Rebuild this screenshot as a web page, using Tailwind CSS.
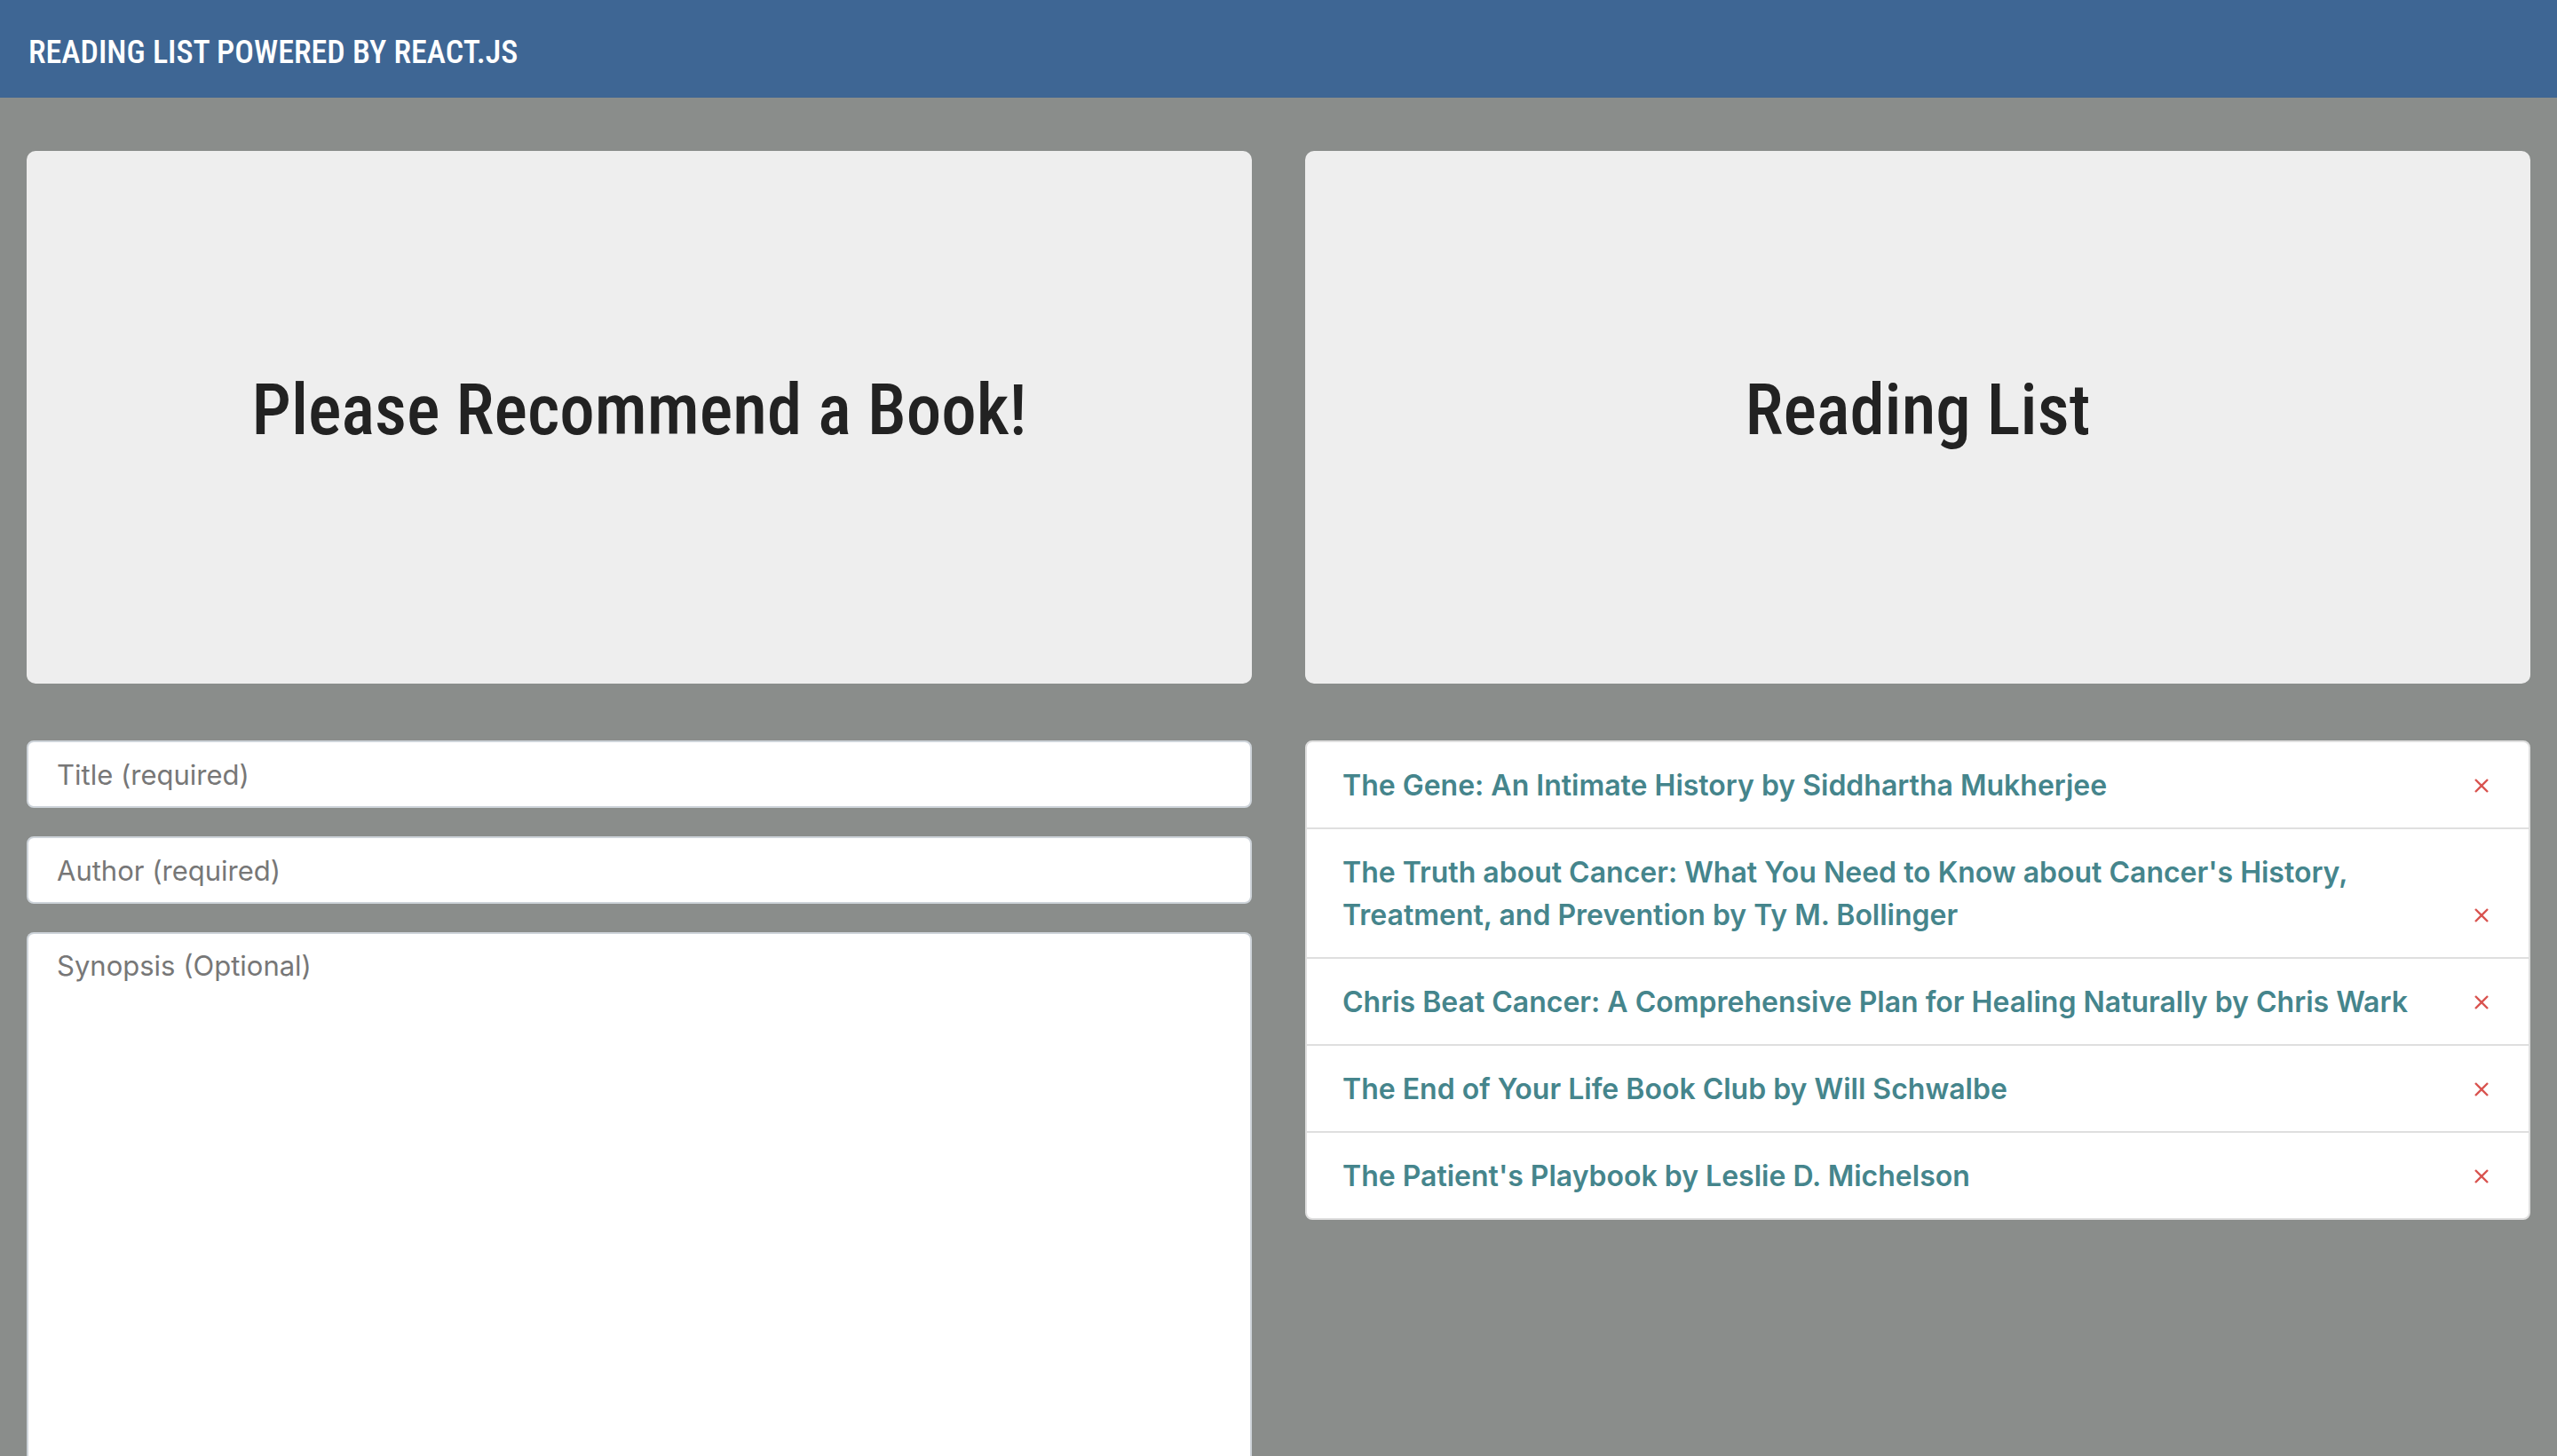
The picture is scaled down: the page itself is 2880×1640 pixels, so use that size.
<!DOCTYPE html>
<html lang="en">
<head>
<meta charset="utf-8">
<title>Reading List</title>
<script src="https://cdn.jsdelivr.net/npm/@tailwindcss/browser@4"></script>
</head>
<body class="min-h-screen bg-[#8a8d8b] font-['Inter',sans-serif] text-[32px] leading-[48px] text-[#222222]">
<nav class="flex h-[110px] items-center bg-[#3e6694] px-8">
  <a href="#" class="font-['Roboto_Condensed',sans-serif] pt-2 text-[36px] leading-[56px] font-medium text-white uppercase">Reading List powered by React.js</a>
</nav>
<main class="grid grid-cols-2 gap-[60px] px-[30px] pt-[60px]">
  <section>
    <header class="flex h-[600px] items-center justify-center rounded-[10px] bg-[#eeeeee]">
      <h1 class="font-['Roboto_Condensed',sans-serif] pb-4 text-[79px] leading-[96px] font-medium">Please Recommend a Book!</h1>
    </header>
    <form class="mt-16 flex flex-col gap-8">
      <input type="text" name="title" aria-label="Title" placeholder="Title (required)" class="h-[76px] w-full rounded-lg border-2 border-[#ced4da] bg-white px-8 text-[31px] placeholder:text-[#777777]">
      <input type="text" name="author" aria-label="Author" placeholder="Author (required)" class="h-[76px] w-full rounded-lg border-2 border-[#ced4da] bg-white px-8 text-[31px] placeholder:text-[#777777]">
      <textarea name="synopsis" rows="20" aria-label="Synopsis" placeholder="Synopsis (Optional)" class="h-[590px] w-full resize-none rounded-t-lg border-2 border-b-0 border-[#ced4da] bg-white px-8 py-3 text-[31px] placeholder:text-[#777777]"></textarea>
    </form>
  </section>
  <section>
    <header class="flex h-[600px] items-center justify-center rounded-[10px] bg-[#eeeeee]">
      <h1 class="font-['Roboto_Condensed',sans-serif] pb-4 text-[79px] leading-[96px] font-medium">Reading List</h1>
    </header>
    <ul class="mt-16 divide-y-2 divide-[#dfdfdf] rounded-lg border-2 border-[#dfdfdf] bg-white font-semibold text-[#45858c]">
      <li class="flex items-end justify-between gap-4 px-10 pt-[25px] pb-[23px]">
        <a href="#">The Gene: An Intimate History by Siddhartha Mukherjee</a>
        <button type="button" aria-label="Delete" class="flex h-12 w-[26px] shrink-0 items-center justify-center text-[#d9534f]"><svg class="size-4" viewBox="0 0 16 16" fill="none" stroke="currentColor" stroke-width="2.4"><path d="M1 1l14 14M15 1L1 15"/></svg></button>
      </li>
      <li class="flex items-end justify-between gap-4 px-10 pt-[25px] pb-[23px]">
        <a href="#">The Truth about Cancer: What You Need to Know about Cancer's History, Treatment, and Prevention by Ty M. Bollinger</a>
        <button type="button" aria-label="Delete" class="flex h-12 w-[26px] shrink-0 items-center justify-center text-[#d9534f]"><svg class="size-4" viewBox="0 0 16 16" fill="none" stroke="currentColor" stroke-width="2.4"><path d="M1 1l14 14M15 1L1 15"/></svg></button>
      </li>
      <li class="flex items-end justify-between gap-4 px-10 pt-[25px] pb-[23px]">
        <a href="#">Chris Beat Cancer: A Comprehensive Plan for Healing Naturally by Chris Wark</a>
        <button type="button" aria-label="Delete" class="flex h-12 w-[26px] shrink-0 items-center justify-center text-[#d9534f]"><svg class="size-4" viewBox="0 0 16 16" fill="none" stroke="currentColor" stroke-width="2.4"><path d="M1 1l14 14M15 1L1 15"/></svg></button>
      </li>
      <li class="flex items-end justify-between gap-4 px-10 pt-[25px] pb-[23px]">
        <a href="#">The End of Your Life Book Club by Will Schwalbe</a>
        <button type="button" aria-label="Delete" class="flex h-12 w-[26px] shrink-0 items-center justify-center text-[#d9534f]"><svg class="size-4" viewBox="0 0 16 16" fill="none" stroke="currentColor" stroke-width="2.4"><path d="M1 1l14 14M15 1L1 15"/></svg></button>
      </li>
      <li class="flex items-end justify-between gap-4 px-10 pt-[25px] pb-[23px]">
        <a href="#">The Patient's Playbook by Leslie D. Michelson</a>
        <button type="button" aria-label="Delete" class="flex h-12 w-[26px] shrink-0 items-center justify-center text-[#d9534f]"><svg class="size-4" viewBox="0 0 16 16" fill="none" stroke="currentColor" stroke-width="2.4"><path d="M1 1l14 14M15 1L1 15"/></svg></button>
      </li>
    </ul>
  </section>
</main>
</body>
</html>
